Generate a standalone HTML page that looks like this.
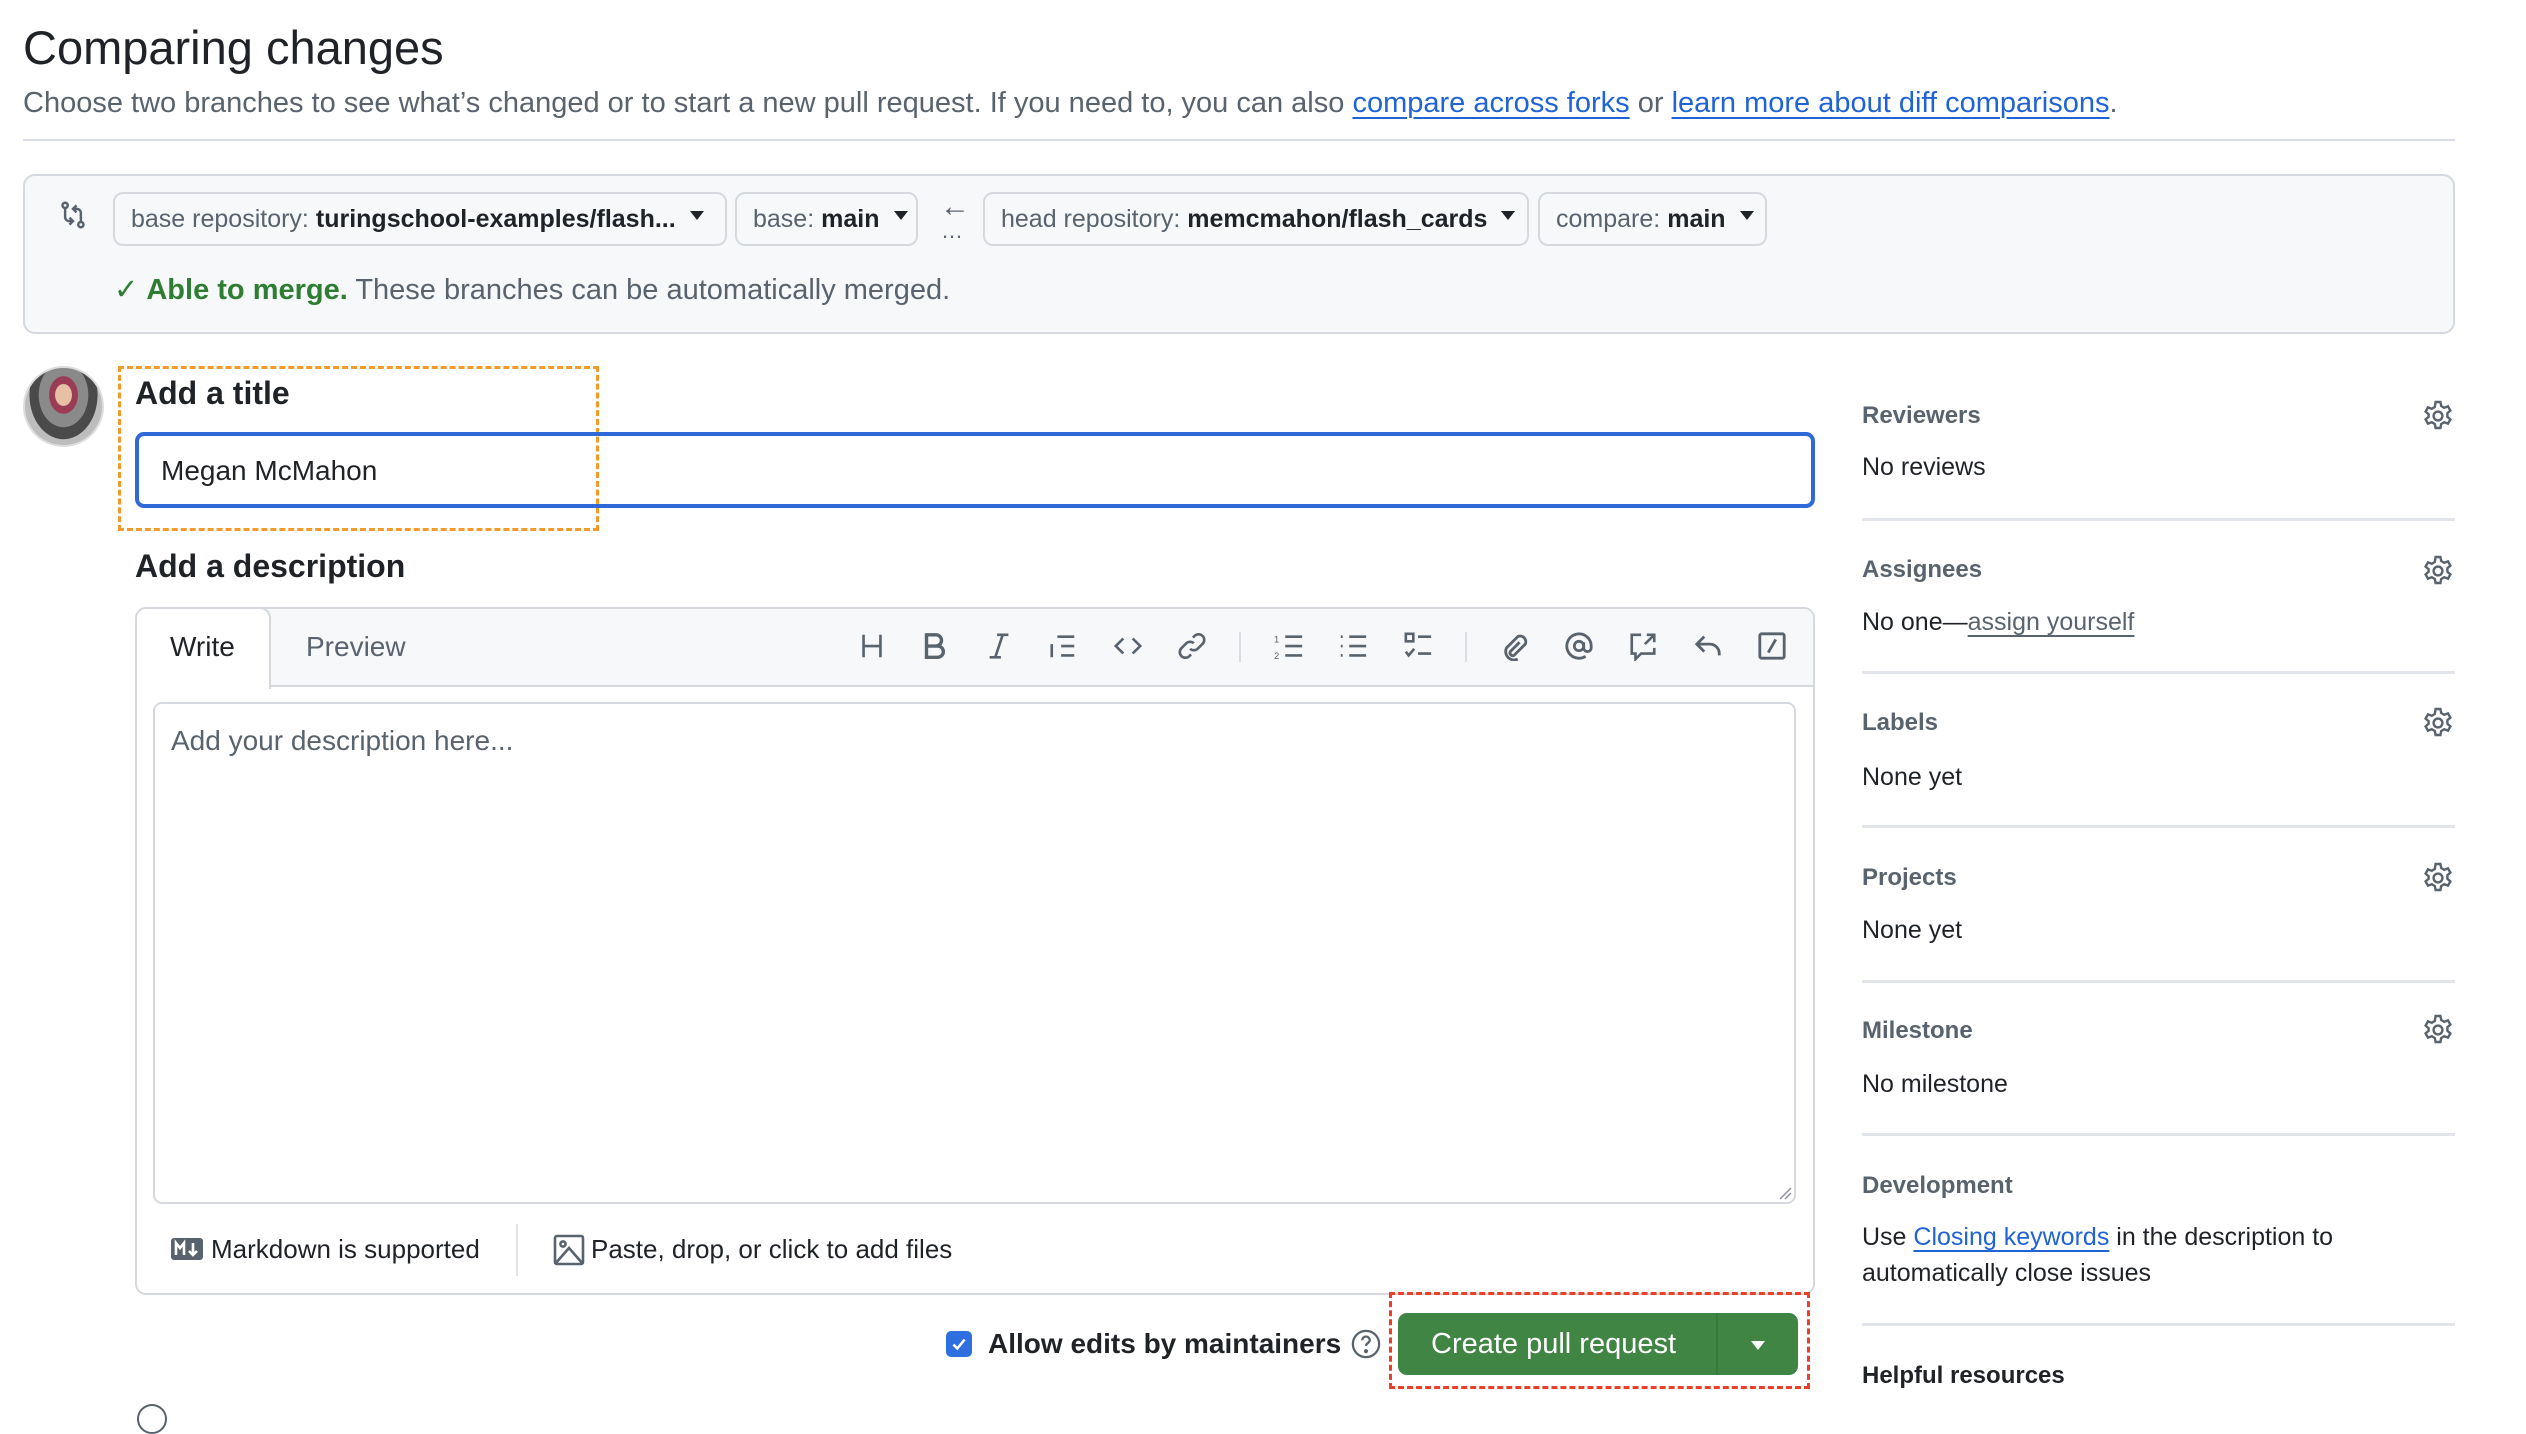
<!DOCTYPE html>
<html><head><meta charset="utf-8">
<style>
*{box-sizing:border-box;margin:0;padding:0}
body{width:2526px;height:1416px;background:#fff;font-family:"Liberation Sans",sans-serif;color:#1f2328;position:relative;overflow:hidden}
.a{position:absolute;white-space:nowrap}
.c{display:flex;align-items:center}
.dd{position:absolute;top:192px;height:54px;border:2px solid #d5d9de;border-radius:10px;background:#f6f8fa;font-size:25px;color:#59636e;display:flex;align-items:center;padding-left:16px}
.dd b{color:#1f2328;font-weight:bold;margin-left:7px}
.tri{display:inline-block;width:0;height:0;border-left:7px solid transparent;border-right:7px solid transparent;border-top:9px solid #1f2328;margin-left:14px;position:relative;top:-4px}
.sh{position:absolute;left:1862px;font-size:24px;font-weight:bold;color:#59636e;line-height:30px}
.sv{position:absolute;left:1862px;font-size:25px;color:#1f2328;line-height:30px}
.sep{position:absolute;left:1862px;width:593px;height:3px;background:#e1e4e8}
.gear{position:absolute;left:2422px;width:32px;height:32px}
.ic{position:absolute;top:631px;width:30px;height:30px}
a{color:#1f63d6;text-decoration:underline;text-underline-offset:5px;text-decoration-thickness:2px}
</style></head><body>

<div class="a" style="left:23px;top:20px;font-size:47px;line-height:56px;color:#1f2328">Comparing changes</div>
<div class="a" style="left:23px;top:86px;font-size:29px;line-height:34px;color:#59636e">Choose two branches to see what’s changed or to start a new pull request. If you need to, you can also <a>compare across forks</a> or <a>learn more about diff comparisons</a>.</div>
<div class="a" style="left:23px;top:139px;width:2432px;height:2px;background:#d8dee4"></div>

<div class="a" style="left:23px;top:174px;width:2432px;height:160px;background:#f6f8fa;border:2px solid #d5d9de;border-radius:12px"></div>
<svg class="a" style="left:59px;top:200px" width="28" height="30" viewBox="0 0 16 16" fill="none" stroke="#59636e" stroke-width="1.4"><circle cx="3.5" cy="2.5" r="1.5"/><path d="M3.5 4v5c0 1.5 1 2.5 2.5 2.5H7.5M6 9.5l2 2-2 2"/><circle cx="12.5" cy="13.5" r="1.5"/><path d="M12.5 12V7c0-1.5-1-2.5-2.5-2.5H8.5M10 2.5l-2 2 2 2"/></svg>
<div class="dd" style="left:113px;width:614px">base repository:<b>turingschool-examples/flash...</b><span class="tri"></span></div>
<div class="dd" style="left:735px;width:183px">base:<b>main</b><span class="tri"></span></div>
<div class="a" style="left:940px;top:190px;font-size:30px;color:#59636e">←</div>
<div class="a" style="left:941px;top:218px;font-size:22px;color:#59636e;letter-spacing:-1px">…</div>
<div class="dd" style="left:983px;width:546px">head repository:<b>memcmahon/flash_cards</b><span class="tri"></span></div>
<div class="dd" style="left:1538px;width:229px">compare:<b>main</b><span class="tri"></span></div>
<div class="a" style="left:114px;top:273px;font-size:29px;line-height:34px;color:#59636e"><span style="color:#2f7d32">✓ <b>Able to merge.</b></span> These branches can be automatically merged.</div>

<div class="a" style="left:23px;top:366px;width:81px;height:81px;border-radius:50%;background:radial-gradient(ellipse at 50% 35%,#e6bfa5 0 15%,#9c3b55 16% 26%,#8a8a8a 27% 45%,#4a4a4a 46% 62%,#bdbdbd 63%);border:2px solid #ddd"></div>
<div class="a" style="left:118px;top:366px;width:481px;height:165px;border:3px dashed #f39a2b"></div>
<div class="a" style="left:135px;top:374px;font-size:32px;font-weight:bold;line-height:38px">Add a title</div>
<div class="a" style="left:135px;top:432px;width:1680px;height:76px;border:4px solid #2f6ad8;border-radius:9px"></div>
<div class="a" style="left:161px;top:455px;font-size:28px;line-height:32px">Megan McMahon</div>

<div class="a" style="left:135px;top:547px;font-size:32px;font-weight:bold;line-height:38px">Add a description</div>
<div class="a" style="left:135px;top:607px;width:1680px;height:688px;border:2px solid #d5d9de;border-radius:11px;overflow:hidden">
  <div class="a" style="left:0;top:0;width:1680px;height:78px;background:#f6f8fa;border-bottom:2px solid #d5d9de"></div>
  <div class="a" style="left:-2px;top:-2px;width:136px;height:82px;background:#fff;border:2px solid #d5d9de;border-bottom:none;border-radius:11px 11px 0 0"></div>
</div>
<div class="a" style="left:170px;top:631px;font-size:28px;line-height:32px">Write</div>
<div class="a" style="left:306px;top:631px;font-size:28px;line-height:32px;color:#59636e">Preview</div>

<svg class="ic" style="left:857px" viewBox="0 0 16 16" fill="none" stroke="#59636e" stroke-width="1.4"><path d="M3.5 2v12M12.5 2v12M3.5 8h9"/></svg>
<svg class="ic" style="left:919px" viewBox="0 0 16 16" fill="none" stroke="#59636e" stroke-width="1.8"><path d="M4 2h5a3 3 0 010 6H4zM4 8h6a3 3 0 010 6H4z"/></svg>
<svg class="ic" style="left:984px" viewBox="0 0 16 16" fill="none" stroke="#59636e" stroke-width="1.4"><path d="M7 2h6M3 14h6M10 2L6 14"/></svg>
<svg class="ic" style="left:1048px" viewBox="0 0 16 16" fill="none" stroke="#59636e" stroke-width="1.4"><path d="M5 3h9M7 8h7M7 13h7M2 7v7"/></svg>
<svg class="ic" style="left:1113px" viewBox="0 0 16 16" fill="none" stroke="#59636e" stroke-width="1.4"><path d="M5.5 4L1.5 8l4 4M10.5 4l4 4-4 4"/></svg>
<svg class="ic" style="left:1177px" viewBox="0 0 16 16" fill="none" stroke="#59636e" stroke-width="1.4"><path d="M7 9.5a3 3 0 004 0l2.5-2.5a3 3 0 00-4-4.5L8.5 3.5M9 6.5a3 3 0 00-4 0L2.5 9a3 3 0 004 4.5l1-1"/></svg>
<div class="a" style="left:1239px;top:632px;width:2px;height:30px;background:#d8dee4"></div>
<svg class="ic" style="left:1274px" viewBox="0 0 16 16" fill="none" stroke="#59636e" stroke-width="1.4"><path d="M6 3h9M6 8h9M6 13h9"/><text x="0" y="6" font-size="5" fill="#59636e" stroke="none">1</text><text x="0" y="15" font-size="5" fill="#59636e" stroke="none">2</text></svg>
<svg class="ic" style="left:1338px" viewBox="0 0 16 16" fill="none" stroke="#59636e" stroke-width="1.4"><path d="M6 3h9M6 8h9M6 13h9M1.5 3h1M1.5 8h1M1.5 13h1"/></svg>
<svg class="ic" style="left:1403px" viewBox="0 0 16 16" fill="none" stroke="#59636e" stroke-width="1.4"><rect x="1.5" y="1.5" width="4" height="4"/><path d="M8 3h7M8 12h7M1.5 11l1.5 2 3-3.5"/></svg>
<div class="a" style="left:1465px;top:632px;width:2px;height:30px;background:#d8dee4"></div>
<svg class="ic" style="left:1499px" viewBox="0 0 16 16" fill="none" stroke="#59636e" stroke-width="1.5"><path d="M11 6l-5 5a1.5 1.5 0 002 2l6-6a3 3 0 00-4-4L4 9a4.5 4.5 0 006 6"/></svg>
<svg class="ic" style="left:1564px" viewBox="0 0 16 16" fill="none" stroke="#59636e" stroke-width="1.5"><circle cx="8" cy="8" r="2.5"/><path d="M10.5 6v3a2 2 0 004 0V8a6.5 6.5 0 10-3 5.5"/></svg>
<svg class="ic" style="left:1628px" viewBox="0 0 16 16" fill="none" stroke="#59636e" stroke-width="1.4"><path d="M7 2H2v10h2v3l3-3h7V9M10 2h4v4M14 2L9 7"/></svg>
<svg class="ic" style="left:1693px" viewBox="0 0 16 16" fill="none" stroke="#59636e" stroke-width="1.5"><path d="M6 3L2 7l4 4M2 7h7a5 5 0 015 5v1"/></svg>
<svg class="ic" style="left:1757px" viewBox="0 0 16 16" fill="none" stroke="#59636e" stroke-width="1.5"><rect x="1.5" y="1.5" width="13" height="13" rx="1"/><path d="M10 4.5L6 11.5"/></svg>

<div class="a" style="left:153px;top:702px;width:1643px;height:502px;border:2px solid #d5d9de;border-radius:9px"></div>
<div class="a" style="left:171px;top:725px;font-size:28px;line-height:32px;color:#59636e">Add your description here...</div>
<svg class="a" style="left:1778px;top:1186px" width="14" height="14"><path d="M2 13L13 2M7 13l6-6" stroke="#8c959f" stroke-width="1.5"/></svg>

<svg class="a" style="left:171px;top:1238px" width="32" height="22" viewBox="0 0 16 11"><rect width="16" height="11" rx="1.5" fill="#59636e"/><path d="M2.5 8.5V2.5l2 2.5 2-2.5v6M11 2.5v6M9 6.5l2 2 2-2" stroke="#fff" stroke-width="1.3" fill="none"/></svg>
<div class="a" style="left:211px;top:1233px;font-size:26px;line-height:32px">Markdown is supported</div>
<div class="a" style="left:516px;top:1224px;width:2px;height:52px;background:#e1e4e8"></div>
<svg class="a" style="left:553px;top:1234px" width="32" height="32" viewBox="0 0 16 16" fill="none" stroke="#59636e" stroke-width="1.3"><rect x="1" y="1" width="14" height="14" rx="1"/><circle cx="5" cy="5" r="1.3"/><path d="M1 15l7-8 7 8"/></svg>
<div class="a" style="left:591px;top:1233px;font-size:26px;line-height:32px">Paste, drop, or click to add files</div>

<div class="a c" style="left:946px;top:1331px;width:26px;height:26px;background:#2f6fe0;border-radius:5px;justify-content:center"><svg width="18" height="18" viewBox="0 0 16 16"><path d="M3 8.5l3.5 3.5 6.5-8" stroke="#fff" stroke-width="2.2" fill="none"/></svg></div>
<div class="a" style="left:988px;top:1327px;font-size:28px;font-weight:bold;line-height:34px">Allow edits by maintainers</div>
<svg class="a" style="left:1351px;top:1329px" width="30" height="30" viewBox="0 0 16 16" fill="none" stroke="#59636e" stroke-width="1.2"><circle cx="8" cy="8" r="7"/><path d="M6 6a2 2 0 114 0c0 1.5-2 1.5-2 3"/><circle cx="8" cy="11.8" r=".5" fill="#59636e"/></svg>
<div class="a" style="left:1389px;top:1292px;width:421px;height:97px;border:3px dashed #e8402a"></div>
<div class="a" style="left:1398px;top:1313px;width:400px;height:62px;background:#418545;border-radius:9px"></div>
<div class="a" style="left:1716px;top:1313px;width:2px;height:62px;background:#3a783d"></div>
<div class="a" style="left:1431px;top:1327px;font-size:29px;line-height:34px;color:#fff">Create pull request</div>
<div class="a" style="left:1751px;top:1341px;width:0;height:0;border-left:7px solid transparent;border-right:7px solid transparent;border-top:9px solid #fff"></div>
<div class="a" style="left:137px;top:1404px;width:30px;height:30px;border:2px solid #59636e;border-radius:50%"></div>

<div class="sh" style="top:401px">Reviewers</div>
<div class="sv" style="top:452px">No reviews</div>
<div class="sep" style="top:518px"></div>
<div class="sh" style="top:555px">Assignees</div>
<div class="sv" style="top:607px">No one—<span style="color:#59636e;text-decoration:underline;text-underline-offset:5px">assign yourself</span></div>
<div class="sep" style="top:671px"></div>
<div class="sh" style="top:708px">Labels</div>
<div class="sv" style="top:762px">None yet</div>
<div class="sep" style="top:825px"></div>
<div class="sh" style="top:863px">Projects</div>
<div class="sv" style="top:915px">None yet</div>
<div class="sep" style="top:980px"></div>
<div class="sh" style="top:1016px">Milestone</div>
<div class="sv" style="top:1069px">No milestone</div>
<div class="sep" style="top:1133px"></div>
<div class="sh" style="top:1171px">Development</div>
<div class="sv" style="top:1222px">Use <a>Closing keywords</a> in the description to</div>
<div class="sv" style="top:1258px">automatically close issues</div>
<div class="sep" style="top:1323px"></div>
<div class="sh" style="top:1361px;color:#1f2328">Helpful resources</div>

<svg class="gear" style="top:400px" viewBox="0 0 16 16" fill="none" stroke="#59636e" stroke-width="1.2"><circle cx="8" cy="8" r="2.2"/><path d="M6.8 1h2.4l.4 2 1.5.9 1.9-.7 1.2 2.1-1.5 1.3v1.8l1.5 1.3-1.2 2.1-1.9-.7-1.5.9-.4 2H6.8l-.4-2-1.5-.9-1.9.7-1.2-2.1 1.5-1.3V7.1L1.8 5.8 3 3.7l1.9.7 1.5-.9z"/></svg>
<svg class="gear" style="top:555px" viewBox="0 0 16 16" fill="none" stroke="#59636e" stroke-width="1.2"><circle cx="8" cy="8" r="2.2"/><path d="M6.8 1h2.4l.4 2 1.5.9 1.9-.7 1.2 2.1-1.5 1.3v1.8l1.5 1.3-1.2 2.1-1.9-.7-1.5.9-.4 2H6.8l-.4-2-1.5-.9-1.9.7-1.2-2.1 1.5-1.3V7.1L1.8 5.8 3 3.7l1.9.7 1.5-.9z"/></svg>
<svg class="gear" style="top:707px" viewBox="0 0 16 16" fill="none" stroke="#59636e" stroke-width="1.2"><circle cx="8" cy="8" r="2.2"/><path d="M6.8 1h2.4l.4 2 1.5.9 1.9-.7 1.2 2.1-1.5 1.3v1.8l1.5 1.3-1.2 2.1-1.9-.7-1.5.9-.4 2H6.8l-.4-2-1.5-.9-1.9.7-1.2-2.1 1.5-1.3V7.1L1.8 5.8 3 3.7l1.9.7 1.5-.9z"/></svg>
<svg class="gear" style="top:862px" viewBox="0 0 16 16" fill="none" stroke="#59636e" stroke-width="1.2"><circle cx="8" cy="8" r="2.2"/><path d="M6.8 1h2.4l.4 2 1.5.9 1.9-.7 1.2 2.1-1.5 1.3v1.8l1.5 1.3-1.2 2.1-1.9-.7-1.5.9-.4 2H6.8l-.4-2-1.5-.9-1.9.7-1.2-2.1 1.5-1.3V7.1L1.8 5.8 3 3.7l1.9.7 1.5-.9z"/></svg>
<svg class="gear" style="top:1014px" viewBox="0 0 16 16" fill="none" stroke="#59636e" stroke-width="1.2"><circle cx="8" cy="8" r="2.2"/><path d="M6.8 1h2.4l.4 2 1.5.9 1.9-.7 1.2 2.1-1.5 1.3v1.8l1.5 1.3-1.2 2.1-1.9-.7-1.5.9-.4 2H6.8l-.4-2-1.5-.9-1.9.7-1.2-2.1 1.5-1.3V7.1L1.8 5.8 3 3.7l1.9.7 1.5-.9z"/></svg>
</body></html>
